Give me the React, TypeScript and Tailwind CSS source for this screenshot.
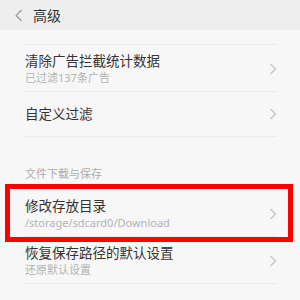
const FONT = { fontFamily: '"Noto Sans", "Noto Sans CJK SC", sans-serif' };

function Chevron() {
  return (
    <svg width="8" height="12" viewBox="0 0 8 12" className="shrink-0">
      <path d="M1.5 1 L6.5 6 L1.5 11" fill="none" stroke="#c4c4c4" strokeWidth="1.3" />
    </svg>
  );
}

function Row({ title, sub }: { title: string; sub?: string }) {
  if (!sub) {
    return (
      <div className="ml-[25px] mr-[23px] h-[45px] flex items-center justify-between border-b border-[#ebebeb]">
        <span className="text-[13.5px] leading-[18px] text-[#333333]">{title}</span>
        <Chevron />
      </div>
    );
  }
  return (
    <div className="ml-[25px] mr-[23px] pt-[7px] pb-[5px] flex items-center justify-between border-b border-[#ebebeb]">
      <div className="flex flex-col">
        <span className="text-[13.5px] leading-[18px] text-[#333333]">{title}</span>
        <span className="text-[11px] leading-[16px] text-[#b3b3b3]">{sub}</span>
      </div>
      <Chevron />
    </div>
  );
}

export default function App() {
  return (
    <div className="relative w-[300px] h-[300px] overflow-hidden bg-[#f7f7f7]" style={FONT}>
      {/* header */}
      <div className="h-[30px] bg-[#eeeeee] flex items-center">
        <svg width="8" height="13" viewBox="0 0 8 13" className="ml-[15px]">
          <path d="M6.5 1 L1.2 6.5 L6.5 12" fill="none" stroke="#9a9a9a" strokeWidth="1.2" />
        </svg>
        <span className="ml-[10px] text-[14px] text-[#333333]">高级</span>
      </div>

      <div className="ml-[25px] mr-[23px] h-[15px] border-b border-[#ebebeb]" />
      <Row title="清除广告拦截统计数据" sub="已过滤137条广告" />
      <Row title="自定义过滤" />

      <div className="pl-[25px] pt-[29px] pb-[8px] text-[11px] leading-[16px] text-[#adadad]">文件下载与保存</div>
      <Row title="修改存放目录" sub="/storage/sdcard0/Download" />
      <Row title="恢复保存路径的默认设置" sub="还原默认设置" />

      {/* red highlight annotation */}
      <div className="absolute left-[5px] top-[184px] w-[288px] h-[58px] border-[5px] border-[#ff0000]" />
    </div>
  );
}
